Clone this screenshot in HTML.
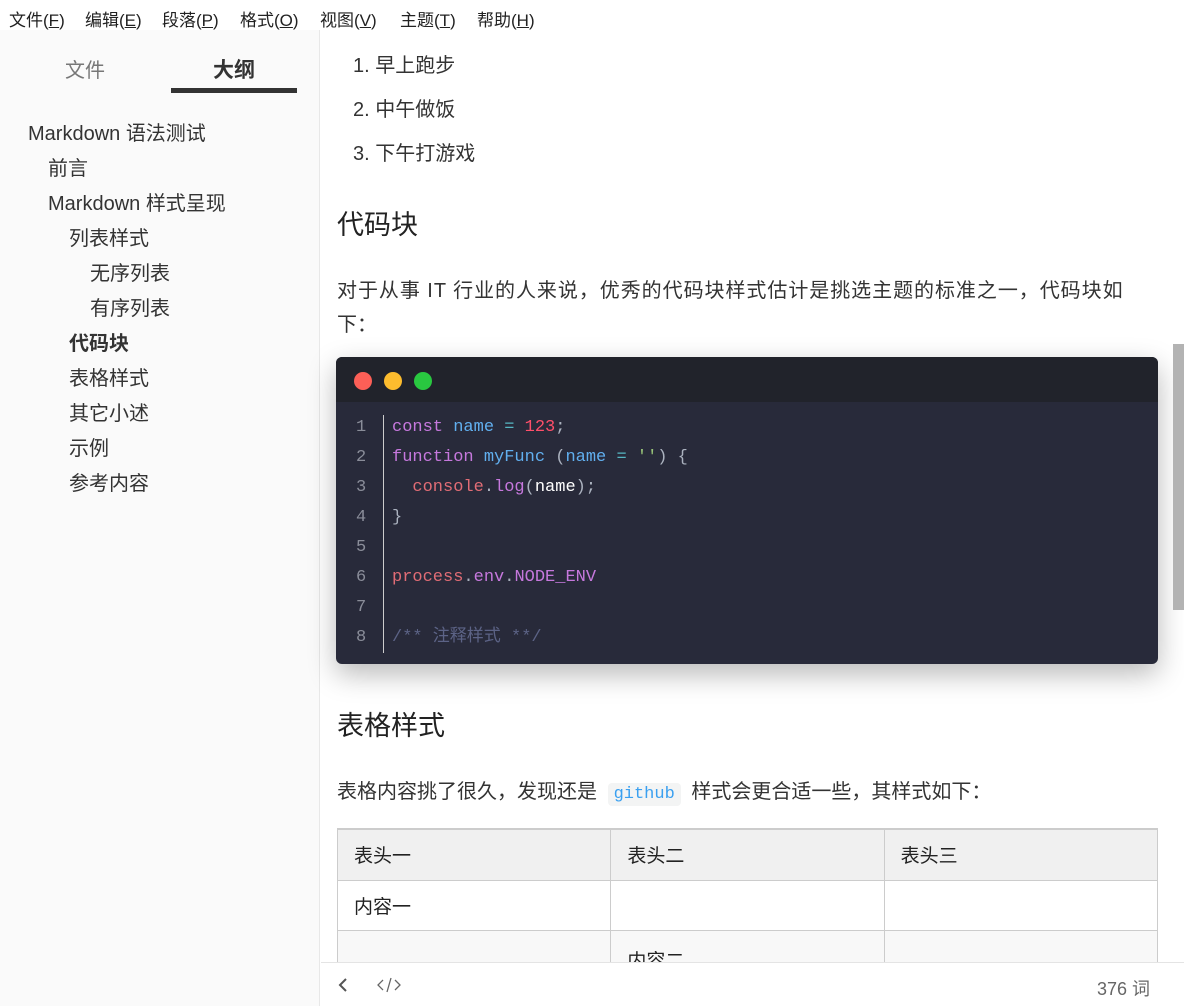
<!DOCTYPE html>
<html><head><meta charset="utf-8"><style>
*{margin:0;padding:0;box-sizing:border-box}
body{width:1184px;height:1006px;overflow:hidden;background:#fff;font-family:"Liberation Sans","Noto Sans CJK SC",sans-serif;color:#333;position:relative}
.a{position:absolute;white-space:nowrap}
#menu{top:0;left:0;width:1184px;height:30px;background:#fff;font-size:17px;color:#222}
#menu span{position:absolute;top:6px}
#side{top:30px;left:0;width:320px;height:976px;background:#fafafa;border-right:1px solid #e8e8e8}
.o{position:absolute;font-size:20px;color:#333;line-height:24px}
.c{font-size:20px;color:#333}
.code{font-family:"Liberation Mono","DejaVu Sans Mono","Noto Sans CJK SC",monospace;font-size:17px;line-height:30px}
</style></head><body>
<div id="menu" class="a">
<span style="left:9px">文件(<u>F</u>)</span><span style="left:85px">编辑(<u>E</u>)</span><span style="left:162px">段落(<u>P</u>)</span><span style="left:240px">格式(<u>O</u>)</span><span style="left:320px">视图(<u>V</u>)</span><span style="left:400px">主题(<u>T</u>)</span><span style="left:477px">帮助(<u>H</u>)</span>
</div>
<div id="side" class="a">
<div class="a" style="left:65px;top:24px;font-size:20px;color:#777">文件</div>
<div class="a" style="left:213px;top:24px;font-size:21px;font-weight:bold;color:#333">大纲</div>
<div class="a" style="left:171px;top:58px;width:126px;height:5px;background:#333"></div>
<div class="o" style="left:28px;top:92px">Markdown 语法测试</div>
<div class="o" style="left:48px;top:127px">前言</div>
<div class="o" style="left:48px;top:162px">Markdown 样式呈现</div>
<div class="o" style="left:69px;top:197px">列表样式</div>
<div class="o" style="left:90px;top:232px">无序列表</div>
<div class="o" style="left:90px;top:267px">有序列表</div>
<div class="o" style="left:69px;top:302px;font-weight:bold">代码块</div>
<div class="o" style="left:69px;top:337px">表格样式</div>
<div class="o" style="left:69px;top:372px">其它小述</div>
<div class="o" style="left:69px;top:407px">示例</div>
<div class="o" style="left:69px;top:442px">参考内容</div>
</div>
<div class="a c" style="left:353px;top:49px">1. 早上跑步</div>
<div class="a c" style="left:353px;top:93px">2. 中午做饭</div>
<div class="a c" style="left:353px;top:137px">3. 下午打游戏</div>
<div class="a" style="left:337px;top:203px;font-size:27px;color:#222">代码块</div>
<div class="a c" style="left:337px;top:274px;letter-spacing:0.95px">对于从事 IT 行业的人来说，优秀的代码块样式估计是挑选主题的标准之一，代码块如</div>
<div class="a c" style="left:337px;top:308px">下：</div>
<div class="a" style="left:336px;top:357px;width:822px;height:307px;background:#282a3a;border-radius:6px;box-shadow:0 10px 28px rgba(0,0,0,.28);overflow:hidden">
<div style="height:45px;background:#21232b;position:relative">
<div class="a" style="left:18px;top:15px;width:18px;height:18px;border-radius:50%;background:#fc5f57"></div>
<div class="a" style="left:48px;top:15px;width:18px;height:18px;border-radius:50%;background:#fdbc2e"></div>
<div class="a" style="left:78px;top:15px;width:18px;height:18px;border-radius:50%;background:#29c840"></div>
</div>
<div class="a" style="left:47px;top:58px;width:1px;height:238px;background:#ccc"></div>
<div class="a code" style="left:20px;top:56px;color:#8a8d99">1<br>2<br>3<br>4<br>5<br>6<br>7<br>8</div>
<div class="a code" style="left:56px;top:56px;color:#abb2bf">
<span style="color:#c678dd">const</span> <span style="color:#61afef">name</span> <span style="color:#56b6c2">=</span> <span style="color:#ff4f6a">123</span>;<br>
<span style="color:#c678dd">function</span> <span style="color:#61afef">myFunc</span> (<span style="color:#61afef">name</span> <span style="color:#56b6c2">=</span> <span style="color:#98c379">''</span>) {<br>
&nbsp;&nbsp;<span style="color:#e06c75">console</span>.<span style="color:#c678dd">log</span>(<span style="color:#fff">name</span>);<br>
}<br><br>
<span style="color:#e06c75">process</span>.<span style="color:#c678dd">env</span>.<span style="color:#c678dd">NODE_ENV</span><br><br>
<span style="color:#5c6386">/** 注释样式 **/</span>
</div>
</div>
<div class="a" style="left:1173px;top:344px;width:11px;height:266px;background:#b3b3b3"></div>
<div class="a" style="left:337px;top:704px;font-size:27px;color:#222">表格样式</div>
<div class="a c" style="left:337px;top:775px">表格内容挑了很久，发现还是 <span style="display:inline-block;background:#f3f4f4;color:#3aa0f0;font-family:'Liberation Mono',monospace;font-size:17px;padding:2px 6px;border-radius:4px;margin:0 5px">github</span> 样式会更合适一些，其样式如下：</div>
<table class="a" style="left:337px;top:828px;width:821px;border-collapse:collapse;font-size:19px;color:#222;table-layout:fixed;white-space:normal">
<tr style="background:#f0f0f0;height:51px"><td style="border:1px solid #ccc;padding-left:16px;border-top:2px solid #ccc">表头一</td><td style="border:1px solid #ccc;padding-left:16px;border-top:2px solid #ccc">表头二</td><td style="border:1px solid #ccc;padding-left:16px;border-top:2px solid #ccc">表头三</td></tr>
<tr style="height:50px"><td style="border:1px solid #ccc;padding-left:16px">内容一</td><td style="border:1px solid #ccc"></td><td style="border:1px solid #ccc"></td></tr>
<tr style="height:50px;background:#f8f8f8"><td style="border:1px solid #ccc"></td><td style="border:1px solid #ccc;padding-left:16px;padding-top:8px">内容二</td><td style="border:1px solid #ccc"></td></tr>
</table>
<div class="a" style="left:321px;top:962px;width:863px;height:44px;background:#fff;border-top:1px solid #e4e4e4">
<svg class="a" style="left:16px;top:14px" width="14" height="16" viewBox="0 0 14 16"><path d="M9 2 L3 8 L9 14" fill="none" stroke="#555" stroke-width="2"/></svg>
<svg class="a" style="left:56px;top:14px" width="24" height="16" viewBox="0 0 24 16"><path d="M6 3 L1 8 L6 13 M18 3 L23 8 L18 13 M14 1 L10 15" fill="none" stroke="#666" stroke-width="1.3"/></svg>
<div class="a" style="right:34px;top:12px;font-size:18px;color:#666">376 词</div>
</div>
</body></html>
